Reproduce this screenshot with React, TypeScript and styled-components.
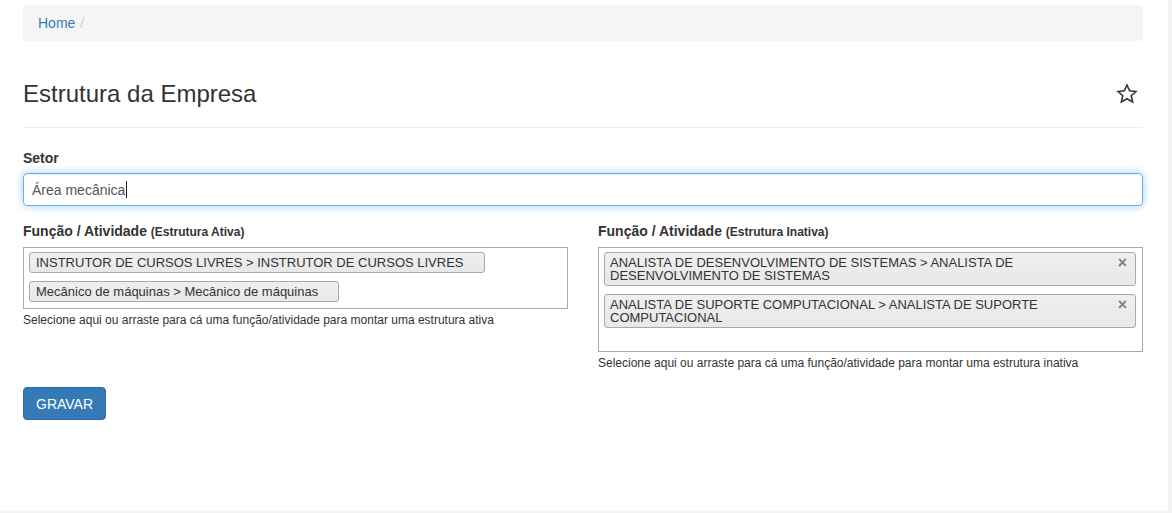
import React from "react";
import styled, { createGlobalStyle } from "styled-components";

const Global = createGlobalStyle`
  html, body { margin: 0; padding: 0; background: #f4f4f4; }
  body { font-family: "Liberation Sans", Arial, Helvetica, sans-serif; font-size: 14px; color: #333; }
  * { box-sizing: border-box; }
`;

const Page = styled.div`
  width: 1168px;
  height: 511px;
  background: #fff;
  padding: 5px 25px 0 23px;
`;

const Breadcrumb = styled.ol`
  list-style: none;
  margin: 0;
  padding: 8px 15px;
  background: #f5f5f5;
  border-radius: 4px;
  line-height: 20px;
  display: flex;
`;

const Crumb = styled.li`
  color: #337ab7;
  &::after {
    content: "/";
    color: #ccc;
    padding: 0 5px;
  }
`;

const PageHeader = styled.div`
  margin-top: 40px;
  padding-bottom: 20px;
  border-bottom: 1px solid #eee;
  display: flex;
  align-items: center;
  justify-content: space-between;
`;

const Title = styled.h1`
  margin: 0;
  font-size: 24px;
  line-height: 26px;
  font-weight: 400;
  color: #333;
`;

const StarButton = styled.span`
  display: flex;
  width: 22px;
  height: 22px;
  margin-right: 5px;
`;

const FormGroup = styled.div`
  margin-top: 20px;
  margin-bottom: 15px;
`;

const Label = styled.div`
  font-weight: 700;
  font-size: 14px;
  line-height: 20px;
  margin-bottom: 5px;
  color: #333;
`;

const Sub = styled.span`
  font-size: 12px;
`;

const Field = styled.div`
  height: 33px;
  border: 1px solid #66afe9;
  border-radius: 4px;
  padding: 6px 8px;
  line-height: 20px;
  color: #555;
  font-size: 14px;
  box-shadow: inset 0 1px 1px rgba(0, 0, 0, 0.075), 0 0 8px rgba(102, 175, 233, 0.6);
  display: flex;
  align-items: center;
`;

const Caret = styled.span`
  display: inline-block;
  width: 1px;
  height: 17px;
  background: #222;
  margin-left: 1px;
`;

const Columns = styled.div`
  display: grid;
  grid-template-columns: 1fr 1fr;
  column-gap: 30px;
  align-items: start;
`;

const ChoiceBox = styled.ul`
  list-style: none;
  margin: 0;
  padding: 0 6px 2px 0;
  border: 1px solid #aaa;
  display: flex;
  flex-wrap: wrap;
  align-items: flex-start;
`;

const Choice = styled.li<{ $closable?: boolean }>`
  position: relative;
  margin: 4px 0 4px 5px;
  padding: 3px ${(p) => (p.$closable ? "24px" : "20px")} 3px ${(p) => (p.$closable ? "5px" : "6px")};
  line-height: 13px;
  font-size: 13px;
  color: #333;
  border: 1px solid #aaa;
  border-radius: 3px;
  background: linear-gradient(#efefef, #e8e8e8);
`;

const Close = styled.span`
  position: absolute;
  right: 8px;
  top: 2px;
  font-size: 16px;
  font-weight: 700;
  color: #808080;
  line-height: 15px;
`;

const SearchSlot = styled.li`
  width: 30px;
  height: 17px;
  margin: 0 0 0 5px;
`;

const Help = styled.div`
  margin-top: 3px;
  font-size: 12px;
  line-height: 17px;
  color: #333;
`;

const Button = styled.button`
  margin-top: 15px;
  font-family: inherit;
  font-size: 14px;
  line-height: 20px;
  padding: 6px 12px 5px;
  color: #fff;
  background: #337ab7;
  border: 1px solid #2e6da4;
  border-radius: 4px;
  cursor: pointer;
`;

const Star = () => (
  <svg width="22" height="22" viewBox="0 0 24 24">
    <polygon
      points="12,2.2 14.9,8.6 21.7,9.3 16.6,13.9 18.1,20.7 12,17.2 5.9,20.7 7.4,13.9 2.3,9.3 9.1,8.6"
      fill="none"
      stroke="#333"
      strokeWidth="1.7"
      strokeLinejoin="miter"
    />
  </svg>
);

type Item = { text: string };

const ChoiceList = ({ items, closable }: { items: Item[]; closable?: boolean }) => (
  <ChoiceBox>
    {items.map((it) => (
      <Choice key={it.text} $closable={closable}>
        {it.text}
        {closable && <Close>×</Close>}
      </Choice>
    ))}
    <SearchSlot />
  </ChoiceBox>
);

export default function App() {
  return (
    <>
      <Global />
      <Page>
        <Breadcrumb>
          <Crumb>Home</Crumb>
        </Breadcrumb>
        <PageHeader>
          <Title>Estrutura da Empresa</Title>
          <StarButton>
            <Star />
          </StarButton>
        </PageHeader>
        <FormGroup>
          <Label>Setor</Label>
          <Field>
            Área mecânica
            <Caret />
          </Field>
        </FormGroup>
        <Columns>
          <div>
            <Label>
              Função / Atividade <Sub>(Estrutura Ativa)</Sub>
            </Label>
            <ChoiceList
              items={[
                { text: "INSTRUTOR DE CURSOS LIVRES > INSTRUTOR DE CURSOS LIVRES" },
                { text: "Mecânico de máquinas > Mecânico de máquinas" },
              ]}
            />
            <Help>Selecione aqui ou arraste para cá uma função/atividade para montar uma estrutura ativa</Help>
          </div>
          <div>
            <Label>
              Função / Atividade <Sub>(Estrutura Inativa)</Sub>
            </Label>
            <ChoiceList
              closable
              items={[
                { text: "ANALISTA DE DESENVOLVIMENTO DE SISTEMAS > ANALISTA DE DESENVOLVIMENTO DE SISTEMAS" },
                { text: "ANALISTA DE SUPORTE COMPUTACIONAL > ANALISTA DE SUPORTE COMPUTACIONAL" },
              ]}
            />
            <Help>Selecione aqui ou arraste para cá uma função/atividade para montar uma estrutura inativa</Help>
          </div>
        </Columns>
        <Button>GRAVAR</Button>
      </Page>
    </>
  );
}
